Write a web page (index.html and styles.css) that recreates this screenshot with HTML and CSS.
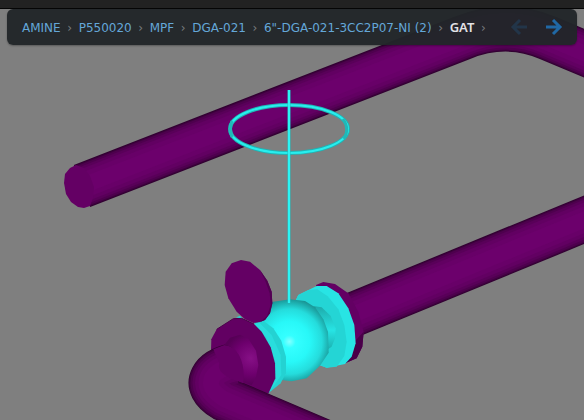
FILE: index.html
```html
<!DOCTYPE html>
<html lang="en">
<head>
<meta charset="utf-8">
<title>Piping model viewer</title>
<link rel="stylesheet" href="styles.css">
</head>
<body>
<header class="titlebar"></header>
<main class="viewport">
  <svg class="scene" viewBox="0 9 584 411" preserveAspectRatio="xMidYMid slice" aria-hidden="true">
    <defs>
      <radialGradient id="ball" gradientUnits="userSpaceOnUse" cx="328" cy="275" r="136">
        <stop offset="0" stop-color="#86ffff"/>
        <stop offset=".14" stop-color="#34ffff"/>
        <stop offset=".45" stop-color="#28f8f8"/>
        <stop offset=".72" stop-color="#25dcdc"/>
        <stop offset="1" stop-color="#168484"/>
      </radialGradient>
      <radialGradient id="collar" gradientUnits="userSpaceOnUse" cx="212" cy="325" r="80">
        <stop offset="0" stop-color="#861086"/>
        <stop offset=".6" stop-color="#6e006e"/>
        <stop offset="1" stop-color="#560056"/>
      </radialGradient>
      <linearGradient id="neck" x1="0" y1="0" x2="0" y2="1">
        <stop offset="0" stop-color="#1eaaaa"/>
        <stop offset=".55" stop-color="#27e4e4"/>
        <stop offset="1" stop-color="#1cb0b0"/>
      </linearGradient>
      <path id="run-a" d="M82 186 L462 38 Q506 20 548 38 L610 64"/>
      <path id="run-b" d="M345 318 L620 205"/>
      <path id="run-c" d="M165 346 C100 358 58 402 132 447 L520 612"/>
    </defs>

    <g class="pipe">
      <use href="#run-a" class="p1"/><use href="#run-a" class="p2"/><use href="#run-a" class="p3"/><use href="#run-a" class="p4"/><use href="#run-a" class="p5"/><use href="#run-a" class="p6"/><use href="#run-a" class="p7"/>
    </g>
    <polygon class="disc" points="76,165 84,168 90,176 94,187 93,198 90,206 84,208 78,207 71,202 66,194 64,183 65,174 70,168"/>

    <g class="pipe">
      <use href="#run-b" class="p1"/><use href="#run-b" class="p2"/><use href="#run-b" class="p3"/><use href="#run-b" class="p4"/><use href="#run-b" class="p5"/><use href="#run-b" class="p6"/><use href="#run-b" class="p7"/>
    </g>

    <g transform="translate(180 250) scale(.33333)">
      <polygon fill="#630063" points="408,105 430,96 465,102 505,130 535,185 551,245 547,290 530,325 495,340 440,300"/>
      <path fill="#490049" d="M551 245 L547 290 L530 325 L495 340 L518 308 L526 272 Z"/>
      <polygon fill="#28e4e4" points="345,155 355,135 410,108 440,108 475,130 505,175 523,225 527,280 515,320 495,342 440,353 418,345"/>
      <polygon fill="#24d5d5" points="345,155 355,135 385,120 412,118 443,139 475,178 493,225 500,275 493,318 470,350 440,353 418,345"/>
      <polygon fill="url(#neck)" points="400,168 425,172 452,198 467,235 465,265 455,290 440,300 415,270"/>
      <polygon fill="url(#ball)" points="220,165 275,156 330,148 375,153 405,172 430,208 444,245 446,308 420,347 380,385 335,394 285,388 230,300"/>
      <polygon fill="#24d2d2" points="222,222 252,214 280,235 304,272 318,320 318,370 302,400 265,430"/>
      <path fill="#29dddd" d="M222 222 L237 217 L275 255 L302 315 L304 375 L265 430 L287 390 L285 330 L258 262Z"/>
      <polygon fill="#29dddd" points="168,202 180,198 190,207"/>
      <polygon fill="#620062" points="93,305 94,268 110,238 160,206 185,205 222,222 245,245 272,292 285,340 286,385 265,431 160,400"/>
      <path fill="none" stroke="#4b004b" stroke-width="3" d="M110 238 L160 206 L185 205 L222 222"/>
      <g class="pipe elbow">
        <use href="#run-c" class="p1"/><use href="#run-c" class="p2"/><use href="#run-c" class="p3"/><use href="#run-c" class="p4"/><use href="#run-c" class="p5"/><use href="#run-c" class="p6"/><use href="#run-c" class="p7"/>
      </g>
      <path fill="#650065" d="M100 298 L133 285 Q160 287 177 315 Q195 350 190 400 L150 385 Q110 365 118 340Z"/>
      <path fill="url(#collar)" d="M133 285 L150 263 L180 254 L205 266 L228 302 L235 345 L228 380 L215 406 L190 397 Q195 350 177 315 Q160 287 133 285Z"/>
      <polygon class="disc" points="183,30 210,35 240,60 262,92 275,125 277,160 270,190 255,210 240,216 220,219 195,208 170,185 145,145 134,105 137,65 155,40"/>
      <path fill="#520052" d="M240 60 L262 92 L275 125 L277 160 L270 190 L255 210 L240 216 L261 198 L272 165 L269 130 L257 96Z"/>
    </g>

    <ellipse class="ring-edge" cx="289" cy="129" rx="59" ry="24"/>
    <ellipse class="ring" cx="289" cy="129" rx="59" ry="24"/>
    <path class="ring-side" d="M232 121 Q229 129 232 137 M343 119 Q350 129 344 139"/>
    <path class="stem-edge" d="M289 90 V303"/>
    <path class="stem" d="M289 90 V303"/>
  </svg>

  <nav class="crumbs" aria-label="Model hierarchy">
    <ol class="trail">
      <li><a href="#amine">AMINE</a></li>
      <li><a href="#p550020">P550020</a></li>
      <li><a href="#mpf">MPF</a></li>
      <li><a href="#dga-021">DGA-021</a></li>
      <li><a href="#line">6"-DGA-021-3CC2P07-NI (2)</a></li>
      <li><a class="current" href="#gat" aria-current="page">GAT</a></li>
    </ol>
    <div class="history">
      <button type="button" aria-label="Back" disabled>
        <svg viewBox="0 0 18 18"><path d="M17 9 H3 M10 2 L3 9 L10 16"/></svg>
      </button>
      <button type="button" aria-label="Forward">
        <svg viewBox="0 0 18 18"><path d="M1 9 H15 M8 2 L15 9 L8 16"/></svg>
      </button>
    </div>
  </nav>
</main>
</body>
</html>
```
FILE: styles.css
```css
* {
  box-sizing: border-box;
}

body {
  margin: 0;
  min-height: 100vh;
  display: flex;
  flex-direction: column;
  background: #7f7f7f;
  font: 12px/18px "DejaVu Sans", sans-serif;
}

.titlebar {
  height: 9px;
  background: #222;
  border-bottom: 1px solid #050505;
}

.viewport {
  position: relative;
  flex: 1;
  padding: 0 7px;
  overflow: hidden;
}

.scene {
  position: absolute;
  inset: 0;
  width: 100%;
  height: 100%;
}

.crumbs {
  position: relative;
  display: flex;
  align-items: center;
  justify-content: space-between;
  height: 36px;
  padding: 0 14px 0 15px;
  border-radius: 6px;
  background: rgba(33, 37, 41, 0.96);
  box-shadow: 0 1px 2px rgba(0, 0, 0, 0.3);
}

.trail {
  display: flex;
  align-items: baseline;
  margin: 0;
  padding: 0;
  list-style: none;
  white-space: nowrap;
}

.trail li::after {
  content: "›";
  display: inline-block;
  width: 18px;
  text-align: center;
  color: #777b7e;
}

.trail a {
  color: #64a7d8;
  text-decoration: none;
}

.trail .current {
  color: #e2e2e6;
  font-family: "Noto Sans", sans-serif;
  font-size: 13px;
  font-weight: 600;
}

.history {
  display: flex;
  gap: 17px;
}

.history button {
  display: flex;
  padding: 0;
  border: 0;
  background: none;
  color: #2068a5;
}

.history button:disabled {
  color: #223549;
}

.history svg {
  width: 18px;
  height: 18px;
  fill: none;
  stroke: currentColor;
  stroke-width: 3;
}

.pipe {
  fill: none;
}

.p1 { stroke: #320032; stroke-width: 45px; }
.p2 { stroke: #400040; stroke-width: 43px; }
.p3 { stroke: #4e004e; stroke-width: 41px; }
.p4 { stroke: #590059; stroke-width: 37px; }
.p5 { stroke: #620062; stroke-width: 32px; }
.p6 { stroke: #680068; stroke-width: 25px; }
.p7 { stroke: #6c006c; stroke-width: 16px; }

.elbow .p1 { stroke-width: 134px; }
.elbow .p2 { stroke-width: 130px; }
.elbow .p3 { stroke-width: 122px; }
.elbow .p4 { stroke-width: 110px; }
.elbow .p5 { stroke-width: 95px; }
.elbow .p6 { stroke-width: 75px; }
.elbow .p7 { stroke-width: 48px; }

.disc {
  fill: #640064;
}

.ring,
.ring-edge,
.ring-side,
.stem,
.stem-edge {
  fill: none;
}

.ring { stroke: #28eeee; stroke-width: 2px; }
.ring-edge { stroke: #1fb4b4; stroke-width: 4px; }
.ring-side { stroke: #20b8b8; stroke-width: 3px; }
.stem { stroke: #2cf4f4; stroke-width: 2px; }
.stem-edge { stroke: #20c4c4; stroke-width: 3px; }
```
